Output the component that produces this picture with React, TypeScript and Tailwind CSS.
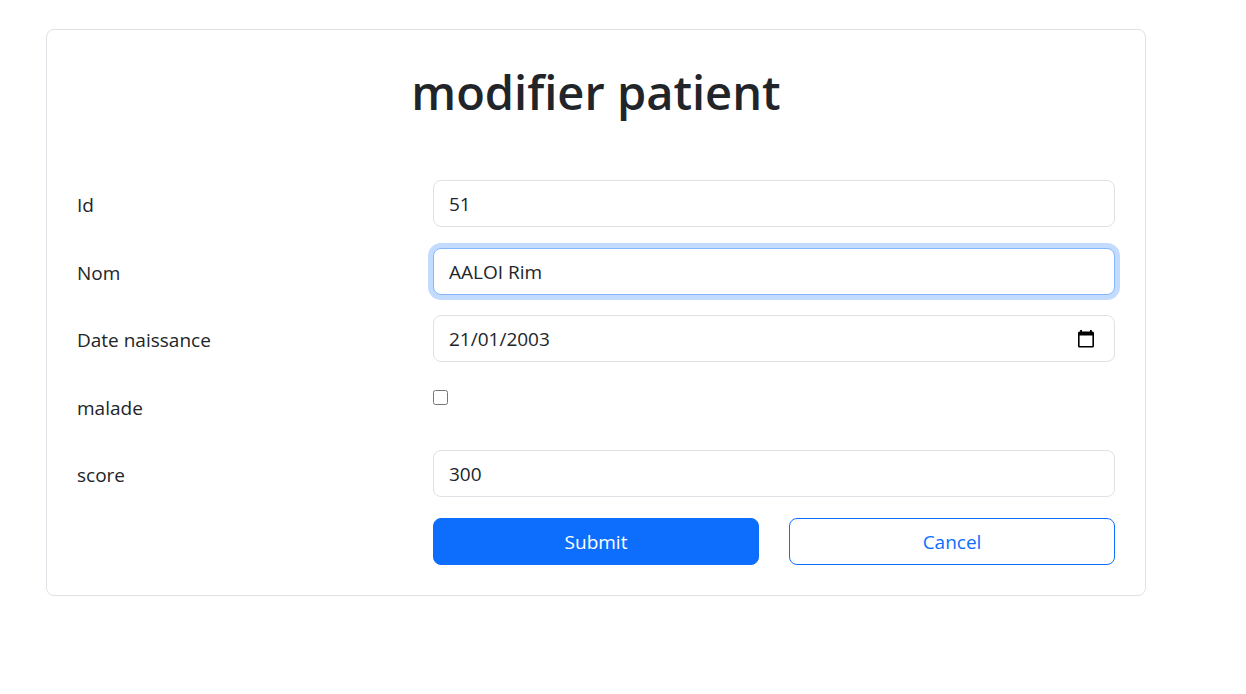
import { useState } from "react";
import type { InputHTMLAttributes, ReactNode } from "react";

const fieldClass =
  "block h-[47px] w-full rounded-lg border border-[#dee2e6] bg-white px-[15px] pt-px text-[19px] text-[#212529] outline-none focus:border-[#86b7fe] focus:ring-[5px] focus:ring-[#0d6efd]/25";

function Row({ id, label, children }: { id: string; label: string; children: ReactNode }) {
  return (
    <div className="grid grid-cols-3 gap-x-[30px] odd:mb-[21px] even:mb-5">
      <label htmlFor={id} className="flex h-[47px] items-center pt-[3px]">
        {label}
      </label>
      <div className="col-span-2">{children}</div>
    </div>
  );
}

function Field(props: InputHTMLAttributes<HTMLInputElement>) {
  return <input type="text" className={fieldClass} {...props} />;
}

function CalendarIcon() {
  return (
    <svg viewBox="0 0 16 18" className="h-[18px] w-4" fill="#000" aria-hidden="true">
      <path
        fillRule="evenodd"
        d="M2.200 0h1.800v1.500h8V0h1.800v1.500h.7A1.500 1.500 0 0 1 16 3v13A1.500 1.500 0 0 1 14.500 17.500h-13A1.500 1.500 0 0 1 0 16V3A1.500 1.500 0 0 1 1.500 1.500h.7V0zM1.600 5.500v10.500h12.800v-10.500z"
      />
    </svg>
  );
}

export default function App() {
  const [sick, setSick] = useState(false);

  return (
    <main className="pt-[29px] pr-[100px] pb-8 pl-[46px] font-['Open_Sans','Noto_Sans',sans-serif] text-[19px] text-[#212529]">
      <div className="rounded-lg border border-[#dee2e6] p-[30px]">
        <h1 className="mb-[58px] pt-[2px] text-center text-[47px] leading-[60px] font-semibold">modifier patient</h1>
        <form onSubmit={(event) => event.preventDefault()}>
          <Row id="id" label="Id">
            <Field id="id" name="id" defaultValue="51" />
          </Row>
          <Row id="nom" label="Nom">
            <Field id="nom" name="nom" defaultValue="AALOI Rim" autoFocus />
          </Row>
          <Row id="dateNaissance" label="Date naissance">
            <div className="relative">
              <Field id="dateNaissance" name="dateNaissance" defaultValue="21/01/2003" />
              <button type="button" aria-label="Calendar" className="absolute inset-y-0 right-[21px] flex items-center">
                <CalendarIcon />
              </button>
            </div>
          </Row>
          <Row id="malade" label="malade">
            <input
              id="malade"
              name="malade"
              type="checkbox"
              checked={sick}
              onChange={(event) => setSick(event.target.checked)}
              className="mt-[7px] block size-[15px]"
            />
          </Row>
          <Row id="score" label="score">
            <Field id="score" name="score" defaultValue="300" />
          </Row>
          <div className="grid grid-cols-3 gap-x-[30px]">
            <button
              type="submit"
              className="col-start-2 h-[47px] rounded-lg border border-[#0d6efd] bg-[#0d6efd] pt-px text-white"
            >
              Submit
            </button>
            <button type="button" className="h-[47px] rounded-lg border border-[#0d6efd] pt-px text-[#0d6efd]">
              Cancel
            </button>
          </div>
        </form>
      </div>
    </main>
  );
}
